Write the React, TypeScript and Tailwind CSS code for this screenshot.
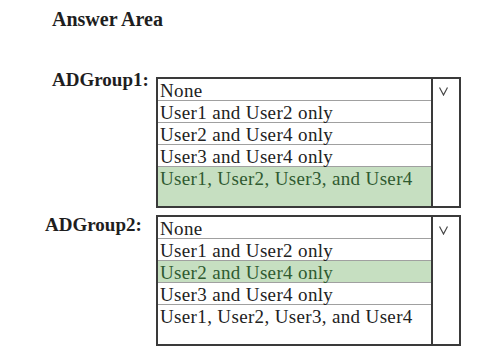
import React from "react";

type Option = { label: string; picked?: boolean };

const options = [
  "None",
  "User1 and User2 only",
  "User2 and User4 only",
  "User3 and User4 only",
  "User1, User2, User3, and User4",
];

const Chevron = () => (
  <svg width="9" height="9" viewBox="0 0 9 9" className="block">
    <polyline points="0.5,0.5 4.5,8 8.5,0.5" fill="none" stroke="#444" strokeWidth="1.2" />
  </svg>
);

const Dropdown = ({ picked, chevTop }: { picked: number; chevTop: string }) => {
  const items: Option[] = options.map((label, i) => ({ label, picked: i === picked }));
  return (
    <div className="flex w-[305px] border-2 border-[#3a3a3a] bg-white">
      <div className="flex w-[275px] flex-col border-r-2 border-[#3a3a3a]">
        {items.map((o, i) => (
          <div
            key={o.label}
            className={[
              "px-[2px] pt-[1px] text-[19px] leading-[21px] tracking-[0.35px]",
              i < items.length - 1 ? "h-[22px] border-b border-[#a0a0a0]" : "h-[39px]",
              o.picked ? "bg-[#c6dfc1] text-[#2f5a30]" : "text-[#222]",
            ].join(" ")}
          >
            {o.label}
          </div>
        ))}
      </div>
      <div className={`flex flex-1 pl-[6px] ${chevTop}`}>
        <Chevron />
      </div>
    </div>
  );
};

export default function App() {
  return (
    <div
      className="h-[351px] w-[479px] bg-white text-[#1e1e1e]"
      style={{ fontFamily: '"Liberation Serif", "Times New Roman", serif' }}
    >
      <div className="pl-[52px] pt-[8px] text-[20px] font-bold leading-[22px]">Answer Area</div>

      <div className="mt-[39px] flex items-start">
        <div className="w-[104px] pl-[52px] text-[19px] font-bold leading-[22px] box-content">ADGroup1:</div>
        <div className="mt-[8px]">
          <Dropdown picked={4} chevTop="pt-[8px]" />
        </div>
      </div>

      <div className="mt-[7px] flex items-start">
        <div className="w-[111px] pl-[45px] text-[19px] font-bold leading-[22px] box-content -mt-[1px]">
          ADGroup2:
        </div>
        <Dropdown picked={2} chevTop="pt-[9px]" />
      </div>
    </div>
  );
}
